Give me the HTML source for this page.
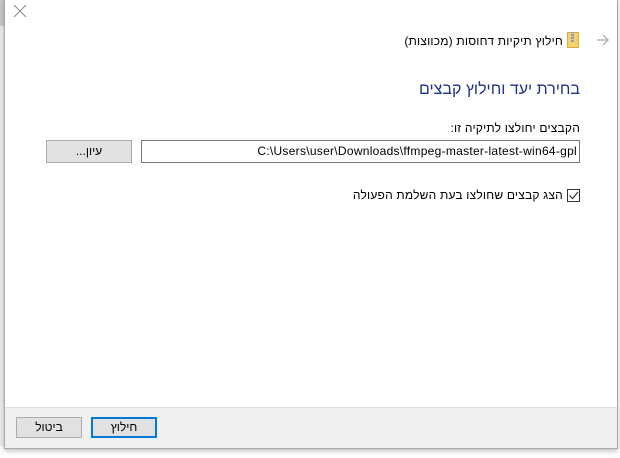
<!DOCTYPE html>
<html><head><meta charset="utf-8"><style>
*{margin:0;padding:0;box-sizing:border-box}
body{width:620px;height:458px;background:#fff;position:relative;overflow:hidden;font-family:"Liberation Sans","DejaVu Sans",sans-serif;font-size:12px;color:#000}
.a{position:absolute}
.win{left:4px;top:-2px;width:614px;height:451px;border:1px solid #a8a8a8;border-top:none;background:#fff;box-shadow:0 2px 5px rgba(0,0,0,.25)}
.foot{left:5px;top:407px;width:612px;height:41px;background:#f0f0f0;border-top:1px solid #dfdfdf}
.btn{height:21px;background:#e1e1e1;border:1px solid #adadad;text-align:center;line-height:19px;font-size:12px;direction:rtl}
.r{direction:rtl;white-space:nowrap}
</style></head><body>
<div class="a" style="left:0;top:0;width:4px;height:26px;background:#c8c8c8"></div>
<div class="a" style="left:0;top:26px;width:4px;height:420px;background:#ececec"></div>
<div class="a win"></div>
<div class="a foot"></div>
<svg class="a" style="left:13px;top:4px" width="14" height="14"><path d="M1 1L13 13M13 1L1 13" stroke="#888" stroke-width="1"/></svg>
<svg class="a" style="left:596px;top:33px" width="14" height="14"><path d="M1 7H12M7 2L12 7L7 12" stroke="#b5b5b5" stroke-width="1.5" fill="none"/></svg>
<svg class="a" style="left:567px;top:31px" width="12" height="17"><rect x="0.5" y="1.5" width="11" height="15" fill="#f3d36b" stroke="#d8ad3c"/><rect x="4" y="1" width="3" height="10" fill="#9a9a9a"/><rect x="4.5" y="2" width="2" height="1" fill="#ddd"/><rect x="4.5" y="5" width="2" height="1" fill="#ddd"/><rect x="4.5" y="8" width="2" height="1" fill="#ddd"/></svg>
<div class="a r" style="right:57px;top:34px;font-size:12px;letter-spacing:0.2px">חילוץ תיקיות דחוסות (מכווצות)</div>
<div class="a r" style="right:40px;top:81px;font-size:16px;color:#1e3287">בחירת יעד וחילוץ קבצים</div>
<div class="a r" style="right:40px;top:121px;letter-spacing:0.2px">הקבצים יחולצו לתיקיה זו:</div>
<div class="a" style="left:141px;top:140px;width:439px;height:23px;border:1px solid #7a7a7a;text-align:right;padding-right:2px;line-height:21px;letter-spacing:0.28px;white-space:nowrap">C:\Users\user\Downloads\ffmpeg-master-latest-win64-gpl</div>
<div class="a btn" style="left:46px;top:140px;width:86px;height:23px;line-height:21px">עיון...</div>
<div class="a" style="left:567px;top:189px;width:13px;height:13px;border:1px solid #333;background:#fff"></div>
<svg class="a" style="left:568px;top:190px" width="11" height="11"><path d="M1.5 5.5L4.5 8.5L10 2" stroke="#333" stroke-width="1.2" fill="none"/></svg>
<div class="a r" style="right:57px;top:188px;letter-spacing:0.2px">הצג קבצים שחולצו בעת השלמת הפעולה</div>
<div class="a btn" style="left:16px;top:417px;width:66px;height:21px">ביטול</div>
<div class="a btn" style="left:91px;top:417px;width:66px;height:21px;border:2px solid #0078d7;line-height:17px">חילוץ</div>
</body></html>
